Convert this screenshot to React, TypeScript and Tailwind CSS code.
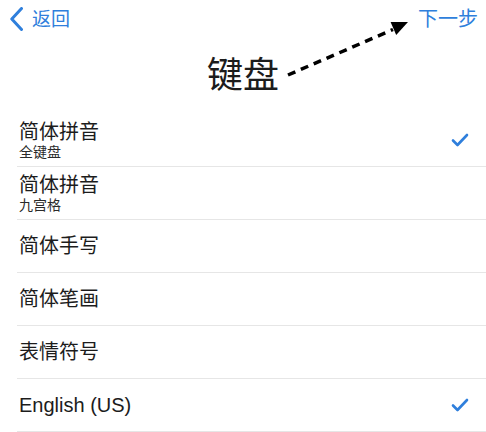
import React from "react";

const rows = [
  { title: "简体拼音", sub: "全键盘", checked: true },
  { title: "简体拼音", sub: "九宫格", checked: false },
  { title: "简体手写", checked: false },
  { title: "简体笔画", checked: false },
  { title: "表情符号", checked: false },
  { title: "English (US)", checked: true },
];

function Check() {
  return (
    <svg width="18" height="14" viewBox="0 0 18 14" fill="none">
      <path d="M2 7.5 L6.5 12 L16 2" stroke="#2f7fdc" strokeWidth="2.6" strokeLinecap="round" strokeLinejoin="round" />
    </svg>
  );
}

export default function App() {
  return (
    <div
      className="relative w-[486px] h-[432px] overflow-hidden bg-white text-[#1c1c1c]"
      style={{ fontFamily: '"Liberation Sans", "Noto Sans CJK SC", sans-serif' }}
    >
      <div className="flex h-[38px] items-center justify-between pl-[10px] pr-[8px] text-[#2f7fdc]">
        <div className="flex items-center gap-[9px]">
          <svg width="13" height="24" viewBox="0 0 13 24" fill="none">
            <path d="M11.5 1.5 L1.8 12 L11.5 22.5" stroke="#2f7fdc" strokeWidth="3" strokeLinecap="round" strokeLinejoin="round" />
          </svg>
          <span className="text-[19px] leading-none">返回</span>
        </div>
        <span className="text-[20px] leading-none">下一步</span>
      </div>

      <div className="flex h-[76px] items-start justify-center pt-[16px]">
        <span className="text-[36px] leading-[44px]">键盘</span>
      </div>

      <svg className="absolute left-0 top-0" width="486" height="100" viewBox="0 0 486 100" fill="none">
        <line x1="288" y1="75" x2="393" y2="29.5" stroke="#000" strokeWidth="3.5" strokeDasharray="8 6" />
        <polygon points="408,22 396.2,34.9 390.6,22.1" fill="#000" />
      </svg>

      <div className="ml-[17px]">
        {rows.map((r, i) => (
          <div
            key={i}
            className="flex h-[53px] items-center justify-between border-b border-[#e6e6e6] pl-[2px] pr-[17px]"
          >
            {r.sub ? (
              <div className="flex flex-col">
                <span className="text-[20px] leading-[24px]">{r.title}</span>
                <span className="text-[14px] leading-[16px] text-[#2a2a2a]">{r.sub}</span>
              </div>
            ) : (
              <span className="text-[20px] leading-[24px]">{r.title}</span>
            )}
            {r.checked && <Check />}
          </div>
        ))}
      </div>
    </div>
  );
}
